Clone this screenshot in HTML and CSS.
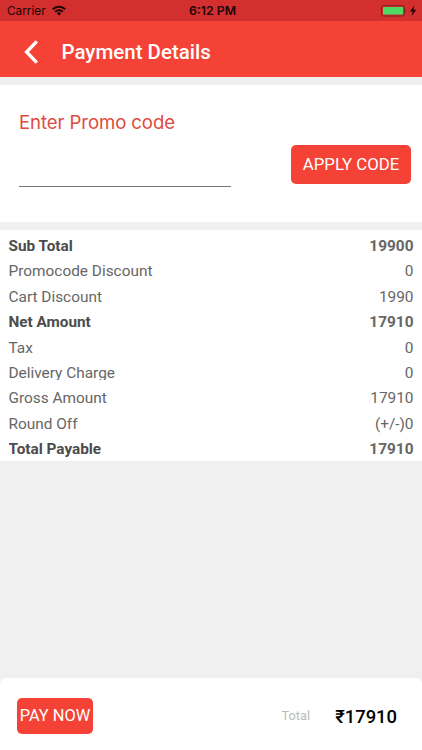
FILE: index.html
```html
<!DOCTYPE html>
<html lang="en">
<head>
  <meta charset="UTF-8">
  <meta name="viewport" content="width=device-width, initial-scale=1.0">
  <title>Payment Details</title>
  <link rel="stylesheet" href="styles.css">
</head>
<body>

<div class="screen">
  <!-- Status bar -->
  <div class="status-bar">
    <div class="carrier">
      <span>Carrier</span>
      <svg class="wifi" width="14" height="11" viewBox="0 0 14 11" fill="none" stroke="#1c0505" stroke-width="2">
        <path d="M0.8 4.2 A8.8 8.8 0 0 1 13.2 4.2"/>
        <path d="M3.2 6.7 A5.4 5.4 0 0 1 10.8 6.7"/>
        <path d="M7 10.6 L4.9 8.4 A3 3 0 0 1 9.1 8.4 Z" fill="#1c0505" stroke="none"/>
      </svg>
    </div>
    <div class="time">6:12 PM</div>
    <div class="battery">
      <svg width="37" height="12" viewBox="0 0 37 12">
        <rect x="0.6" y="0.6" width="22.8" height="10.4" rx="2" fill="none" stroke="#7d2020"/>
        <rect x="2" y="2" width="20" height="7.6" rx="0.6" fill="#4cd964"/>
        <path d="M24.4 4 Q26 5.7 24.4 7.4 Z" fill="#7d2020"/>
        <path d="M33.4 0.6 L29 6.5 H31.8 L30.6 11 L35.2 4.8 H32.4 Z" fill="#1c0505"/>
      </svg>
    </div>
  </div>

  <!-- Header -->
  <div class="header">
    <svg class="back" width="16" height="24" viewBox="0 0 16 24">
      <path d="M14.8 1.4 L4.6 12 L14.8 22.6" fill="none" stroke="#fff" stroke-width="3.4"/>
    </svg>
    <h1>Payment Details</h1>
  </div>

  <!-- Promo code -->
  <div class="promo">
    <div class="promo-field">
      <label for="promoCode">Enter Promo code</label>
      <input type="text" id="promoCode" class="promo-input">
    </div>
    <button class="apply-button">APPLY CODE</button>
  </div>

  <!-- Amounts -->
  <div class="summary">
    <div class="row bold"><span class="name">Sub Total</span><span>19900</span></div>
    <div class="row"><span class="name">Promocode Discount</span><span>0</span></div>
    <div class="row"><span class="name">Cart Discount</span><span>1990</span></div>
    <div class="row bold"><span class="name">Net Amount</span><span>17910</span></div>
    <div class="row"><span class="name">Tax</span><span>0</span></div>
    <div class="row"><span class="name clipped">Delivery Charge</span><span>0</span></div>
    <div class="row"><span class="name">Gross Amount</span><span>17910</span></div>
    <div class="row"><span class="name">Round Off</span><span>(+/-)0</span></div>
    <div class="row bold"><span class="name clipped">Total Payable</span><span>17910</span></div>
  </div>

  <!-- Footer -->
  <div class="footer">
    <button class="pay-button">PAY NOW</button>
    <span class="total-label">Total</span>
    <span class="total-amount">₹17910</span>
  </div>
</div>

</body>
</html>
```
FILE: styles.css
```css
* {
  box-sizing: border-box;
}
body {
  margin: 0;
  background: #f0f0f0;
  font-family: Roboto, sans-serif;
}
.screen {
  display: flex;
  flex-direction: column;
  height: 750px;
  overflow: hidden;
}
.status-bar {
  display: grid;
  grid-template-columns: 1fr auto 1fr;
  align-items: center;
  height: 21px;
  padding: 0 4px 0 7px;
  background: #d32f2f;
  color: #1c0505;
  font-family: Inter, sans-serif;
  font-size: 12px;
}
.carrier {
  display: flex;
  align-items: center;
  gap: 6px;
  font-size: 11.8px;
}
.time {
  font-weight: 600;
  font-size: 12.3px;
}
.battery {
  display: flex;
  justify-content: flex-end;
}
.header {
  display: flex;
  align-items: center;
  height: 56px;
  padding: 5px 22px 0;
  background: #f44336;
  color: #fff;
}
.header h1 {
  margin: 1px 0 0 23.5px;
  font-size: 20.5px;
  font-weight: 500;
  line-height: 24px;
}
.back {
  flex: none;
}
.promo {
  display: flex;
  justify-content: space-between;
  height: 137px;
  margin-top: 8px;
  padding: 0 11px 0 19px;
  background: #fff;
}
.promo-field {
  width: 212px;
  padding-top: 25px;
}
.promo-field label {
  display: block;
  height: 24px;
  color: #e04a3f;
  font-family: Inter, sans-serif;
  font-size: 18.6px;
  letter-spacing: -0.1px;
  line-height: 24px;
}
.promo-input {
  display: block;
  width: 100%;
  height: 53px;
  padding: 0;
  border: none;
  border-bottom: 1px solid #777;
  background: none;
  font-size: 18px;
  outline: none;
}
button {
  padding: 0;
  border: none;
  border-radius: 5px;
  background-color: #f44336;
  color: #fff;
  font-family: Roboto, sans-serif;
}
.apply-button {
  width: 120px;
  height: 39px;
  margin-top: 60px;
  padding-bottom: 1px;
  font-size: 16.8px;
}
.summary {
  height: 231px;
  margin-top: 8px;
  padding: 3px 8.5px 0;
  background: #fff;
  color: #666;
  font-size: 15.4px;
}
.row {
  display: flex;
  justify-content: space-between;
  height: 25.4px;
  line-height: 26px;
}
.bold {
  font-weight: 700;
}
.bold .name {
  color: #4c4c4c;
  font-size: 15.3px;
}
/* fixed label height cuts the descenders */
.clipped {
  height: 20.5px;
  overflow: hidden;
}
.footer {
  display: flex;
  align-items: center;
  height: 72px;
  margin-top: auto;
  padding: 3px 25px 0 17px;
  border-radius: 6px 6px 0 0;
  background: #fff;
}
.pay-button {
  width: 76px;
  height: 36px;
  font-size: 16.4px;
}
.total-label {
  margin-left: auto;
  color: #bbb;
  font-size: 12.8px;
}
.total-amount {
  margin-left: 25px;
  padding-top: 1px;
  color: #000;
  font-size: 18.4px;
  font-weight: 500;
}
```
